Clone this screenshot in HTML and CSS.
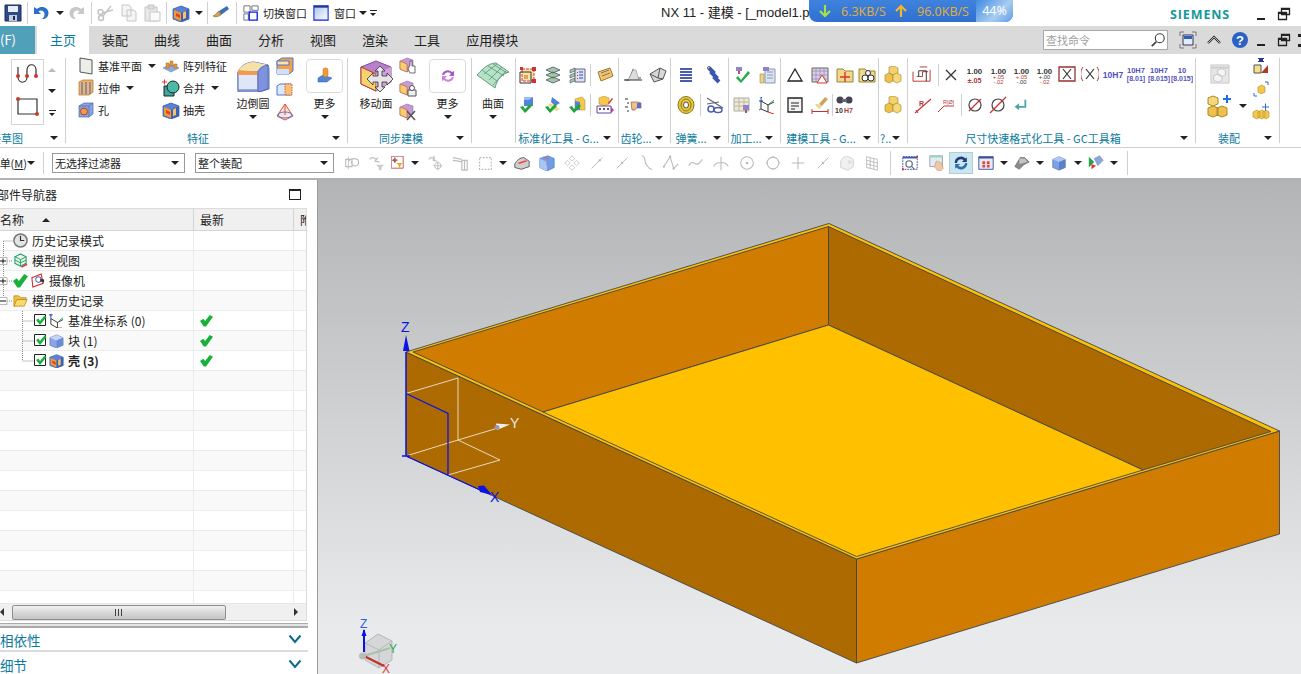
FILE: index.html
```html
<!DOCTYPE html>
<html lang="zh-CN">
<head>
<meta charset="utf-8">
<title>NX 11 - 建模</title>
<link rel="stylesheet" href="styles.css">
</head>
<body>
<svg class="sprite" xmlns="http://www.w3.org/2000/svg">
<symbol id="save" viewBox="0 0 18 18"><path d="M1 1h16v16H1z" fill="#2d4a8a" stroke="#1c2c55"/><path d="M4 2h10v6H4z" fill="#e8eef8"/><path d="M5 11h8v6H5z" fill="#c5ccd8"/><path d="M9 12h2v4H9z" fill="#1c2c55"/></symbol>
<symbol id="undo" viewBox="0 0 18 18"><path d="M2 3v7h7L6.500 7.500C9 5.500 13 7 12.500 11c-.2 2-1.500 3.500-3 4 4 .5 7-2 7-6C16.500 3.500 9.500 1 5 5z" fill="#2a6fc9"/></symbol>
<symbol id="redo" viewBox="0 0 18 18"><path d="M16 3v7H9l2.500-2.500C9 5.500 5 7 5.500 11c.2 2 1.500 3.500 3 4-4 .5-7-2-7-6C1.500 3.500 8.500 1 13 5z" fill="#c8c8c8"/></symbol>
<symbol id="cut" viewBox="0 0 18 18"><path d="M14 2 6 12M16 6 5 9" stroke="#c4c4c4" stroke-width="1.500" fill="none"/><circle cx="4" cy="14" r="2.500" fill="none" stroke="#c4c4c4" stroke-width="1.500"/><circle cx="3.500" cy="8" r="2.500" fill="none" stroke="#c4c4c4" stroke-width="1.500"/></symbol>
<symbol id="copy" viewBox="0 0 18 18"><path d="M2 1h7l2 2v9H2zM7 6h7l2 2v9H7z" fill="#f4f4f4" stroke="#c6c6c6"/></symbol>
<symbol id="paste" viewBox="0 0 18 18"><path d="M2 3h12v14H2z" fill="#e8e8e8" stroke="#c6c6c6"/><path d="M5 1h6v4H5z" fill="#ddd" stroke="#c6c6c6"/><path d="M7 8h10v9H7z" fill="#fafafa" stroke="#c6c6c6"/></symbol>
<symbol id="shell" viewBox="0 0 18 18"><path d="M1 5l8-3 8 3v10l-8 3-8-3z" fill="#5a82d2" stroke="#2b4d96" stroke-width=".7"/><path d="M2 6l7 3v8l-7-3z" fill="#f09a30"/><path d="M4 9l4 2v3l-4-2z" fill="#e2402c"/><path d="M9 9l8-4v10l-8 3z" fill="#3a62b8"/><path d="M11 8.500l3-1.500v7l-3 1.200z" fill="#fbc060"/></symbol>
<symbol id="brush" viewBox="0 0 18 18"><path d="M7 7l8-5 2 3-8 6z" fill="#3f6fb2"/><path d="M1 12c3-1 4-4 6-5l2 4c-2 1-5 3-8 1z" fill="#c9a65a" stroke="#6a5326" stroke-width=".5"/></symbol>
<symbol id="switch" viewBox="0 0 18 18"><path d="M1 1h7v7H1zM10 1h7v5h-7zM1 10h5v7H1z" fill="#fff" stroke="#667"/><path d="M7 8h9v9H7z" fill="#fff" stroke="#0b1fe0" stroke-width="1.500"/></symbol>
<symbol id="win" viewBox="0 0 18 18"><defs><linearGradient id="gw" x1="0" y1="0" x2="1" y2="1"><stop offset="0" stop-color="#a9c2ea"/><stop offset="1" stop-color="#fff"/></linearGradient></defs><path d="M1 1h16v16H1z" fill="url(#gw)" stroke="#0b1fe0" stroke-width="1.200"/><path d="M1 1h16v2H1z" fill="#203a90"/></symbol>
<symbol id="spline" viewBox="0 0 24 24"><path d="M2 5v10c0 7 9 7 9 0V8c0-7 9-7 9 0v7" fill="none" stroke="#333" stroke-width="1.200"/><circle cx="2" cy="14" r="2" fill="#c83a2e"/><circle cx="11" cy="14" r="2" fill="#c83a2e"/><circle cx="20" cy="14" r="2" fill="#c83a2e"/></symbol>
<symbol id="rectk" viewBox="0 0 24 24"><path d="M2 4h19v15H2z" fill="none" stroke="#333" stroke-width="1.200"/><circle cx="2" cy="4" r="2" fill="#c83a2e"/><circle cx="21" cy="19" r="2" fill="#c83a2e"/></symbol>
<symbol id="plane" viewBox="0 0 18 18"><path d="M3 1l12 2v14L3 15z" fill="#ecefe8" stroke="#555"/></symbol>
<symbol id="pattern" viewBox="0 0 18 18"><path d="M1 11l8-4 8 4-8 4z" fill="#8ea9dc" stroke="#5874b2" stroke-width=".5"/><path d="M4 6h3v5H4zM8 4h3v5H8zM12 7h3v4h-3z" fill="#e8973a" stroke="#a9651a" stroke-width=".5"/></symbol>
<symbol id="extrude" viewBox="0 0 18 18"><path d="M2 3l4-2h10v12l-4 3H2z" fill="#f2b36a" stroke="#b06a20" stroke-width=".7"/><path d="M5 3v12M9 3v12M13 3v12" stroke="#4a74c8" stroke-width="1.200"/></symbol>
<symbol id="unite" viewBox="0 0 18 18"><path d="M2 7h10v10H2z" fill="#3fa59c" stroke="#222"/><circle cx="11" cy="8" r="6" fill="#4cb9a9" stroke="#222"/><path d="M0 3h5M2.500.500v5" stroke="#d33" stroke-width="1"/></symbol>
<symbol id="hole" viewBox="0 0 18 18"><path d="M2 5l5-3h9v11l-4 3H2z" fill="#8aa5e0" stroke="#4b68ab" stroke-width=".7"/><path d="M12 16V5l4-3M12 5H2" stroke="#4b68ab" stroke-width=".7" fill="none"/><circle cx="7" cy="10.500" r="3.500" fill="#e8a050" stroke="#c43a2a"/></symbol>
<symbol id="blend" viewBox="0 0 34 32"><path d="M2 12C5 5 12 2 18 2L32 5C33 7 33 10 33 12v17l-10 3H2z" fill="#a7b7ea" stroke="#5a6eb8"/><path d="M2 12C5 5 12 2 18 2l14 3c-7 0-9 3-11 7z" fill="#f6e2a6"/><path d="M2 12h20v18H2z" fill="#dfe6f7" stroke="#5a6eb8"/><path d="M2 10l20 2v3H2z" fill="#f09a54"/><path d="M22 12c2-4 5-6 10-7v24l-10 3z" fill="#7f92de" stroke="#5a6eb8"/></symbol>
<symbol id="chamf" viewBox="0 0 18 18"><path d="M1 4l5-3h11v13l-4 3H1z" fill="#f2a04c" stroke="#4d79c9"/><path d="M1 4h12v4H1z" fill="#fce2ae" stroke="#4d79c9"/><path d="M1 12h12v5H1z" fill="#cfe0fa"/></symbol>
<symbol id="offset" viewBox="0 0 18 18"><path d="M1 6l3-2h11v11H1z" fill="#dfe8fb" stroke="#4d79c9"/><path d="M9 4h7v11H9z" fill="#f5c26d" stroke="#d55" stroke-dasharray="1.500 1"/></symbol>
<symbol id="cone" viewBox="0 0 18 18"><path d="M9 1L1 13l8 4 8-4z" fill="#f9e3da" stroke="#e0503a"/><ellipse cx="9" cy="12" rx="7" ry="3" fill="none" stroke="#4d79c9"/><path d="M9 1v11" stroke="#e0503a"/></symbol>
<symbol id="moreblk" viewBox="0 0 18 18"><path d="M2 11l5-3 9 3-5 4H2z" fill="#4f86d6" stroke="#2f5aa5" stroke-width=".5"/><rect x="7" y="1" width="5" height="9" rx="2" fill="#f09a30" stroke="#c5701a" stroke-width=".5"/></symbol>
<symbol id="moveface" viewBox="0 0 34 32"><path d="M2 7l15-6 15 6v15l-15 9-15-7z" fill="#b880cc" stroke="#7a4c92"/><path d="M2 7l15 7v17L2 24z" fill="#f5d36a" stroke="#c0392b"/><path d="M17 14l15-7v15l-15 9z" fill="#d1a3dd"/><path d="M21 6l5 5h-3v5h5v-3l6 6-6 6v-3h-5v5h3l-5 5-5-5h3v-5h-5v3l-6-6 6-6v3h5v-5h-3z" fill="#e6e6e6" stroke="#333" stroke-width=".8"/></symbol>
<symbol id="facehand" viewBox="0 0 18 18"><path d="M1 4l7-3 6 2v8l-6 4-7-3z" fill="#c79ad2" stroke="#8a5ea0" stroke-width=".5"/><path d="M1 4l7 3v8l-7-3z" fill="#f7d06a" stroke="#c0392b" stroke-width=".5"/><path d="M11 8V4h2v5h3v7h-5l-2-4z" fill="#fff" stroke="#333" stroke-width=".7"/></symbol>
<symbol id="facecopy" viewBox="0 0 18 18"><path d="M1 4l7-3 6 2v8l-6 4-7-3z" fill="#c79ad2" stroke="#8a5ea0" stroke-width=".5"/><path d="M1 4l7 3v8l-7-3z" fill="#f7d06a" stroke="#c0392b" stroke-width=".5"/><path d="M9 10h8v6H9z" fill="#eee" stroke="#555"/><circle cx="13" cy="8" r="2.500" fill="#fff" stroke="#555"/></symbol>
<symbol id="facedel" viewBox="0 0 18 18"><path d="M1 4l7-3 6 2v8l-6 4-7-3z" fill="#c79ad2" stroke="#8a5ea0" stroke-width=".5"/><path d="M1 4l7 3v8l-7-3z" fill="#f7d06a" stroke="#c0392b" stroke-width=".5"/><path d="M8 8l8 9M16 8l-8 9" stroke="#555" stroke-width="1.500"/></symbol>
<symbol id="syncmore" viewBox="0 0 18 18"><path d="M3 8a6 6 0 0 1 10-3l2-1v5h-5l2-2a4 4 0 0 0-7 1z" fill="#a658c4"/><path d="M15 10a6 6 0 0 1-10 3l-2 1V9h5l-2 2a4 4 0 0 0 7-1z" fill="#c987dc"/></symbol>
<symbol id="surface" viewBox="0 0 34 28"><path d="M1 13C8 5 14 1 20 1l13 9c-7 2-12 7-14 16z" fill="#b4e3c6" stroke="#6c9a7e"/><path d="M6 8l15 11M12 4l16 10M17 2l14 9M26 5L13 18M21 2L8 12M30 9L17 23" stroke="#5f927a" stroke-width=".8" fill="none"/></symbol>
<symbol id="std1" viewBox="0 0 18 18"><path d="M3 3h12v12H3z" fill="#f7e5a6" stroke="#d33" stroke-dasharray="3 1"/><path d="M1 6h11v11H1z" fill="none" stroke="#333"/><rect x="5" y="9" width="4" height="4" fill="#e9a05a"/><path d="M13 1h4v4h-4zM1 1h3v3H1zM13 13h4v4h-4z" fill="#c33"/></symbol>
<symbol id="std2" viewBox="0 0 18 18"><path d="M2 4l7-3 7 3-7 3zM2 9l7-3 7 3-7 3zM2 14l7-3 7 3-7 3z" fill="#a6c6a4" stroke="#456" stroke-width=".8"/></symbol>
<symbol id="std3" viewBox="0 0 18 18"><path d="M2 4l5-2v3L2 7zM2 9l5-2v3l-5 2zM2 14l5-2v3l-5 2z" fill="#a6c6a4" stroke="#456" stroke-width=".6"/><path d="M7 3h10v13H7z" fill="#d8e4f5" stroke="#667"/><path d="M9 6h1v1H9zM9 9h1v1H9zM9 12h1v1H9z" fill="#c33"/><path d="M11 6h4M11 9h4M11 12h4" stroke="#44a"/></symbol>
<symbol id="tag" viewBox="0 0 18 18"><path d="M2 6l12-4 3 8-12 5z" fill="#f3c56b" stroke="#a8742c"/><path d="M5 7l8-3M6 10l8-3" stroke="#777"/></symbol>
<symbol id="chk1" viewBox="0 0 18 18"><path d="M5 1h9v9H5z" fill="#4f84d8"/><path d="M5 1l4-0h5l-4 3H5z" fill="#9cbcf0"/><path d="M1 11l3-1 2 3 5-5 2 2-7 7z" fill="#1fa53a"/></symbol>
<symbol id="chk2" viewBox="0 0 18 18"><path d="M8 1l8 6-5 3-4-4z" fill="#4f84d8"/><path d="M6 7l10 6-4 2-8-6z" fill="#e8dc86"/><path d="M1 11l3-1 2 3 5-5 2 2-7 7z" fill="#1fa53a"/></symbol>
<symbol id="chk3" viewBox="0 0 18 18"><path d="M7 3l7-2 3 3v10H7z" fill="#f5c84a" stroke="#a88a2c" stroke-width=".5"/><path d="M7 5l5 1v8H7z" fill="#4f84d8"/><path d="M1 11l3-1 2 3 5-5 2 2-7 7z" fill="#1fa53a"/></symbol>
<symbol id="boxtxt" viewBox="0 0 18 18"><path d="M3 2l5-2 5 2v6l-5 2-5-2z" fill="#f5c84a" stroke="#a88a2c" stroke-width=".5"/><path d="M1 10h14v7H1z" fill="#fff" stroke="#634a9a"/><path d="M3 13h2M7 13h2M11 13h2" stroke="#634a9a" stroke-width="2"/><path d="M15 11l3 3-3 3z" fill="#b33aa8"/><path d="M12 7l4-5 1 1-4 5z" fill="#c33"/></symbol>
<symbol id="gear1" viewBox="0 0 18 18"><path d="M1 14h4l4-10 3 8h5" fill="none" stroke="#555" stroke-width="1.200"/><path d="M4 14L9 4h3l3 10" fill="#ddd" stroke="#888" stroke-width=".6"/><path d="M0 14h18" stroke="#333"/></symbol>
<symbol id="gear2" viewBox="0 0 18 18"><path d="M1 8l10-6 6 3-3 8-9 3z" fill="#d8d8d8" stroke="#555"/><path d="M1 8l8 4 2-10M14 13L9 12" stroke="#555" fill="none"/></symbol>
<symbol id="gear3" viewBox="0 0 18 18"><path d="M1 3h3M3 7h2M1 11h3M3 15h2" stroke="#333"/><path d="M7 6h7l3 1v5h-5l-1 2H8z" fill="#f0c090" stroke="#7a4a20" stroke-width=".6"/><path d="M13 7h4v5h-4z" fill="#5a6ecb"/></symbol>
<symbol id="spring" viewBox="0 0 18 18"><path d="M3 3h12M3 6h12M3 9h12M3 12h12M3 15h12" stroke="#4a5cb0" stroke-width="1.800"/></symbol>
<symbol id="spring2" viewBox="0 0 18 18"><path d="M3 2l4 4-1 1 4 4-1 1 4 4" fill="none" stroke="#3b55b0" stroke-width="4"/><circle cx="3" cy="2" r="1.500" fill="none" stroke="#556"/></symbol>
<symbol id="coil" viewBox="0 0 18 18"><ellipse cx="9" cy="9" rx="8" ry="8.500" fill="#e8c83a" stroke="#8a7420"/><ellipse cx="9" cy="9" rx="5" ry="6" fill="none" stroke="#8a7420"/><ellipse cx="9" cy="9" rx="2.500" ry="3" fill="#fff" stroke="#555"/></symbol>
<symbol id="scis" viewBox="0 0 18 18"><path d="M1 2l16 10M1 8l12-2" stroke="#667" stroke-width="1.200"/><ellipse cx="12" cy="14" rx="4" ry="2.500" fill="none" stroke="#4a5cb0" stroke-width="1.500"/><ellipse cx="5" cy="13" rx="3" ry="3" fill="none" stroke="#4a5cb0" stroke-width="1.500"/></symbol>
<symbol id="mach1" viewBox="0 0 18 18"><path d="M3 1h6v4H3z" fill="#8f84c8"/><path d="M5 5h2v3H5z" fill="#b6536a"/><path d="M5 10l3 4 7-9 2 2-9 10-5-5z" fill="#22ad4a"/></symbol>
<symbol id="mach2" viewBox="0 0 18 18"><path d="M7 3h10v14H7z" fill="#dce6f2" stroke="#8a96b0"/><path d="M9 6h6M9 9h6M9 12h6" stroke="#8a96b0"/><path d="M2 8h4v9H2z" fill="#e8d58a" stroke="#8a7420" stroke-width=".5"/><path d="M5 1h6v4H5z" fill="#8f84c8"/></symbol>
<symbol id="mach3" viewBox="0 0 18 18"><path d="M1 2h15v13H1z" fill="#f1ebcd" stroke="#aaa"/><path d="M1 6h15M1 10h15M6 2v13M11 2v13" stroke="#b6b6b6"/><path d="M10 9h6v5h-6z" fill="#8f84c8"/><path d="M12 14h2v3h-2z" fill="#b6536a"/></symbol>
<symbol id="mach4" viewBox="0 0 18 18"><path d="M3 5l7 4v7l-7-3zM10 9l6-3" fill="none" stroke="#333"/><path d="M3 1v4M3 13l-2 1" stroke="#26a"/><path d="M10 16l6 2" stroke="#c33"/><path d="M11 8l5-4" stroke="#2a5"/><path d="M1 5h4M3 1l1 1" stroke="#1538c8"/></symbol>
<symbol id="tri" viewBox="0 0 18 18"><path d="M9 3L2 15h14z" fill="none" stroke="#222" stroke-width="1.300"/></symbol>
<symbol id="tabl" viewBox="0 0 18 18"><path d="M1 2h16v14H1z" fill="#d9d0e8" stroke="#665"/><path d="M1 5h16M1 9h16M1 13h16M5 2v14M9 2v14M13 2v14" stroke="#8a7aa8" stroke-width=".6"/><path d="M11 9l5 8H6z" fill="#fff" stroke="#d33"/></symbol>
<symbol id="fold1" viewBox="0 0 18 18"><path d="M1 3h6l2 2h8v11H1z" fill="#eed98a" stroke="#9a8436"/><path d="M9 6v10M4 11h10" stroke="#d33" stroke-width="1.400"/></symbol>
<symbol id="fold2" viewBox="0 0 18 18"><path d="M1 3h6l2 2h8v11H1z" fill="#eed98a" stroke="#9a8436"/><circle cx="7" cy="12" r="3" fill="#fff" stroke="#333"/><circle cx="13" cy="12" r="3" fill="#fff" stroke="#333"/><circle cx="10" cy="7" r="2.500" fill="#fff" stroke="#333"/></symbol>
<symbol id="note" viewBox="0 0 18 18"><path d="M2 2h14v14H2z" fill="#f3f3f3" stroke="#222" stroke-width="1.300"/><path d="M5 7h8M5 10h8M5 13h4" stroke="#222"/></symbol>
<symbol id="paint" viewBox="0 0 18 18"><path d="M8 8l6-7 3 2-6 7z" fill="#c9a65a"/><path d="M4 8c2 0 4 0 7 2l-2 3c-2-1-4-3-5-5z" fill="#e7d594"/><path d="M1 13v5M17 13v5M1 15.500h16" stroke="#b33"/></symbol>
<symbol id="cubes" viewBox="0 0 18 18"><path d="M5 1l5-1 4 2v5l-5 2-4-2z" fill="#f5d16a" stroke="#9a8436" stroke-width=".6"/><path d="M1 9l4-2 4 2v6l-4 2-4-2z" fill="#efc04a" stroke="#9a8436" stroke-width=".6"/><path d="M9 9l4-2 4 2v6l-4 2-4-2z" fill="#f7d878" stroke="#9a8436" stroke-width=".6"/></symbol>
<symbol id="dim" viewBox="0 0 22 20"><path d="M1 6v10M19 4v12M1 16h18M5 11h6V6h6" fill="none" stroke="#b33"/><path d="M7 11V5h8v11" fill="none" stroke="#333"/><path d="M8 1h8" stroke="#b33"/></symbol>
<symbol id="x" viewBox="0 0 18 18"><path d="M4 4l10 10M14 4L4 14" stroke="#333" stroke-width="1.300"/></symbol>
<symbol id="xbox" viewBox="0 0 18 18"><path d="M1 1h16v14H1z" fill="#fff" stroke="#9a3030" stroke-width="1.300"/><path d="M5 3l8 10M13 3L5 13" stroke="#333" stroke-width="1.200"/></symbol>
<symbol id="xpar" viewBox="0 0 18 18"><path d="M2 1C-1 5-1 11 2 15" fill="none" stroke="#b33"/><path d="M16 1c3 4 3 10 0 14" fill="none" stroke="#b33"/><path d="M5 3l8 10M13 3L5 13" stroke="#333" stroke-width="1.200"/></symbol>
<symbol id="dia1" viewBox="0 0 18 18"><circle cx="9" cy="9" r="6" fill="#fff" stroke="#444" stroke-width="1.200"/><path d="M3 15L15 3" stroke="#c33" stroke-width="1.200"/></symbol>
<symbol id="dia2" viewBox="0 0 18 18"><circle cx="9" cy="9" r="6" fill="none" stroke="#444" stroke-width="1.200"/><path d="M1 17L17 1" stroke="#c33" stroke-width="1.200"/></symbol>
<symbol id="ret" viewBox="0 0 18 18"><path d="M14 3v7H8V7L3 11l5 4v-3h8V3z" fill="#4aa5a8"/></symbol>
<symbol id="asmgrey" viewBox="0 0 22 22"><path d="M1 1h20v20H1z" fill="#e6e6e6" stroke="#c9c9c9"/><path d="M1 4h20" stroke="#ccc" stroke-width="2"/><path d="M4 13l5-2 4 2v5l-4 2-5-2zM8 7l5-2 4 2v5l-4 2-4-2z" fill="#f4f4f4" stroke="#c4c4c4"/></symbol>
<symbol id="asmadd" viewBox="0 0 26 24"><path d="M2 4l5-2 5 2v6l-5 2-5-2z" fill="#f7d878" stroke="#a88a2c"/><path d="M2 14l5-2 5 2v7l-5 2-5-2zM11 14l5-2 5 2v7l-5 2-5-2z" fill="#efc04a" stroke="#a88a2c"/><path d="M17 5h8M21 1v8" stroke="#1f6fe0" stroke-width="2"/></symbol>
<symbol id="asm1" viewBox="0 0 18 18"><path d="M6 1l3 3 3-3M6 5l3-3 3 3" fill="#223a90" stroke="#223a90"/><path d="M2 8h7v8H2z" fill="#f3e08a" stroke="#555"/><path d="M16 16H9l7-8z" fill="#b03a2a"/></symbol>
<symbol id="asm2" viewBox="0 0 18 18"><path d="M6 7l4-2 3 2v5l-4 2-3-2z" fill="#f5c84a" stroke="#a88a2c" stroke-width=".6"/><path d="M2 16v-3M2 16h3M13 2h3v3" stroke="#2a6fc9" fill="none"/></symbol>
<symbol id="asm3" viewBox="0 0 18 18"><path d="M1 9l4-2 3 2v5l-3 2-4-2zM6 9l4-2 3 2v5l-3 2-4-2zM11 9l3-2 3 2v5l-3 2-3-2z" fill="#f5c84a" stroke="#a88a2c" stroke-width=".6"/><path d="M10 4h7M13.500.500v7" stroke="#2a6fc9"/></symbol>
<symbol id="s1" viewBox="0 0 18 18"><path d="M2 5h7v8H2zM5 7c3-4 8-3 10-2 2 2 2 6-1 7-3 1-6-2-6-5" fill="none" stroke="#bcbcbc" stroke-width="1.200"/><path d="M5 2v14" stroke="#bcbcbc"/></symbol>
<symbol id="s2" viewBox="0 0 18 18"><path d="M1 5c2-3 5-2 7 0M10 3l-3 4 5 1" fill="none" stroke="#bcbcbc" stroke-width="1.300"/><path d="M8 11h9l-3 3v3h-3v-3z" fill="#ccc"/></symbol>
<symbol id="s3" viewBox="0 0 18 18"><path d="M.500.500h15v15H.500z" fill="#fff" stroke="#b53838"/><path d="M5 2v7M1.500 5.500h7" stroke="#444"/><circle cx="5" cy="5.500" r="1.800" fill="none" stroke="#c33"/><path d="M7 9h8l-3 3v3h-2v-3z" fill="#e9a928"/></symbol>
<symbol id="s4" viewBox="0 0 18 18"><path d="M1 5c2-3 5-2 7 0M7 1L6 6l4 1" fill="none" stroke="#bcbcbc" stroke-width="1.300"/><circle cx="11" cy="12" r="3.500" fill="none" stroke="#bcbcbc"/><path d="M11 7v10M6 12h10" stroke="#bcbcbc"/></symbol>
<symbol id="s5" viewBox="0 0 18 18"><path d="M1 3l5 1 5 1M1 6l6 1 5 1M11 6h6v11h-6zM14 6v11" stroke="#bcbcbc" fill="none" stroke-width="1.300"/></symbol>
<symbol id="s6" viewBox="0 0 18 18"><path d="M3 3h13v13H3z" fill="none" stroke="#b8b8b8" stroke-dasharray="2 1.500" stroke-width="1.300"/></symbol>
<symbol id="s7" viewBox="0 0 18 18"><path d="M1 10C3 6 7 3 11 3l6 4v6l-9 3-7-2z" fill="#cfcfcf" stroke="#555"/><path d="M4 9l9-3 2 1-9 3z" fill="#e44"/></symbol>
<symbol id="s8" viewBox="0 0 18 18"><path d="M1 4l9-3 7 3v10l-8 4-8-4z" fill="#6f9de6" stroke="#3a68b5" stroke-width=".6"/><path d="M1 4l8 4v10l-8-4z" fill="#a6c6f3"/><path d="M5 2l6 3M9 8v4" stroke="#e46060"/></symbol>
<symbol id="s9" viewBox="0 0 18 18"><path d="M9 1l3 3-3 3-3-3zM9 11l3 3-3 3-3-3zM1 9l3-3 3 3-3 3zM11 9l3-3 3 3-3 3z" fill="none" stroke="#c4c4c4"/></symbol>
<symbol id="sln" viewBox="0 0 18 18"><path d="M3 15L15 3" stroke="#bbb" stroke-width="1.100"/><circle cx="12" cy="6" r="1.300" fill="#bbb"/></symbol>
<symbol id="sln2" viewBox="0 0 18 18"><path d="M3 15L15 3" stroke="#bbb" stroke-width="1.100"/><circle cx="9" cy="9" r="1.400" fill="#bbb"/></symbol>
<symbol id="scrv" viewBox="0 0 18 18"><path d="M4 1c5 0 3 6 5 9s3 6 7 6" fill="none" stroke="#bbb" stroke-width="1.200"/></symbol>
<symbol id="spoly" viewBox="0 0 18 18"><path d="M1 13L8 2l4 13 5-5" fill="none" stroke="#bbb" stroke-width="1.200"/><circle cx="8" cy="2" r="1.300" fill="#bbb"/><circle cx="12" cy="15" r="1.300" fill="#bbb"/><circle cx="1" cy="13" r="1.300" fill="#bbb"/></symbol>
<symbol id="swave" viewBox="0 0 18 18"><path d="M1 12c3-6 5-3 8-2s4-1 7-5" fill="none" stroke="#bbb" stroke-width="1.200"/></symbol>
<symbol id="sarc" viewBox="0 0 18 18"><path d="M1 13c2-6 14-6 16 0M9 2v15" fill="none" stroke="#bbb" stroke-width="1.200"/></symbol>
<symbol id="scir" viewBox="0 0 18 18"><circle cx="9" cy="9" r="7" fill="none" stroke="#bbb" stroke-width="1.200"/><circle cx="9" cy="9" r="1.500" fill="#bbb"/></symbol>
<symbol id="scir2" viewBox="0 0 18 18"><circle cx="9" cy="9" r="6.500" fill="none" stroke="#bbb" stroke-width="1.200"/><path d="M9 1v2M9 15v2M1 9h2M15 9h2" stroke="#bbb"/></symbol>
<symbol id="splus" viewBox="0 0 18 18"><path d="M9 2v14M2 9h14" stroke="#bbb" stroke-width="1.200"/></symbol>
<symbol id="sface" viewBox="0 0 18 18"><path d="M2 7c1-4 6-6 9-5l5 3v8l-6 4-8-3z" fill="#f0f0f0" stroke="#d0d0d0"/><circle cx="12" cy="8" r="2" fill="#ddd"/></symbol>
<symbol id="sgrid" viewBox="0 0 18 18"><path d="M3 2l12 3v12L3 14z" fill="none" stroke="#bbb"/><path d="M7 3v12M11 4v12M3 6l12 3M3 10l12 3" stroke="#bbb"/></symbol>
<symbol id="v1" viewBox="0 0 18 18"><path d="M1 2h16v14H1z" fill="#fff" stroke="#2c4a9a" stroke-dasharray="2 1"/><path d="M1 2h16v2H1z" fill="#3a5cb0"/><circle cx="8" cy="10" r="3.500" fill="none" stroke="#667" stroke-width="1.300"/><path d="M11 13l3 3" stroke="#667" stroke-width="1.300"/><circle cx="1" cy="16" r="1.300" fill="#c33"/><circle cx="17" cy="2" r="1.300" fill="#c33"/></symbol>
<symbol id="v2" viewBox="0 0 18 18"><path d="M1 1h14v12H1z" fill="#e3ebf5" stroke="#99a"/><path d="M1 1h14v2H1z" fill="#9db"/><path d="M8 7l2 0 4 2 2 6-3 3h-3l-4-5z" fill="#eec7a4" stroke="#b08a6a" stroke-width=".5"/></symbol>
<symbol id="v3" viewBox="0 0 18 18"><path d="M2 9a7 7 0 0 1 12-5l1.500-1.500V8h-5.500L12 6A4.500 4.500 0 0 0 4.500 9z" fill="#1c3f7c"/><path d="M16 9a7 7 0 0 1-12 5l-1.500 1.500V10H8l-2 2A4.500 4.500 0 0 0 13.500 9z" fill="#2a6fb0"/></symbol>
<symbol id="v4" viewBox="0 0 18 18"><path d="M1 2h16v14H1z" fill="#e8e8f5" stroke="#3a4f9a"/><path d="M1 2h16v2H1z" fill="#3a4f9a"/><path d="M5 7h3v3H5zM10 7h3v3h-3zM5 11h3v3H5zM10 11h3v3h-3z" fill="#d84a3a"/></symbol>
<symbol id="v5" viewBox="0 0 18 18"><path d="M1 13l6-10h5l5 5-6 3-5 5z" fill="#8a8a8a" stroke="#555" stroke-width=".6"/><path d="M6 4h6l3 4-9 2z" fill="#c4c4c4"/></symbol>
<symbol id="v6" viewBox="0 0 18 18"><path d="M2 5l7-3 7 3v9l-7 3-7-3z" fill="#7ea0e4" stroke="#4a68a8" stroke-width=".6"/><path d="M2 5l7 3 7-3-7-3z" fill="#b0c8f2"/><path d="M9 8v9l7-3V5z" fill="#5b80cc"/></symbol>
<symbol id="v7" viewBox="0 0 18 18"><path d="M7 4l6-3 4 5-6 6z" fill="#8ea6d8" stroke="#5d78b0" stroke-width=".5"/><path d="M1 2l6 6-6 6z" fill="#26a34a"/><path d="M4 10l5 2-5 4z" fill="#d33"/></symbol>
<symbol id="clock" viewBox="0 0 16 16"><circle cx="8" cy="8" r="7" fill="#e4e4e4" stroke="#777" stroke-width="1.600"/><path d="M8 3v5h4" fill="none" stroke="#333" stroke-width="1.300"/></symbol>
<symbol id="mview" viewBox="0 0 16 16"><path d="M8 1l6 3v7l-6 3-6-3V4z" fill="#e8f6ea" stroke="#1fa066" stroke-width="1.100"/><path d="M2 4l6 3 6-3M8 7v7M2 7.500l6 3 6-3" fill="none" stroke="#1fa066"/><path d="M9 15l6-3" stroke="#d33" stroke-width="1.500"/></symbol>
<symbol id="ok" viewBox="0 0 14 14"><path d="M0 7.500L3.500 5l2 2.500L10.500 1 14 3 6.500 13.500H4z" fill="#19b13c"/></symbol>
<symbol id="cam" viewBox="0 0 16 16"><path d="M2 5l10-4 2 10-11 4z" fill="#fff" stroke="#d9281e" stroke-width="1.100"/><circle cx="9" cy="7" r="3" fill="none" stroke="#2a3fa8"/><path d="M11 6l4 1v3l-4-1z" fill="#333"/></symbol>
<symbol id="fold" viewBox="0 0 16 16"><path d="M1 3h5l2 2h6v2H5l-3 7H1z" fill="#f3c23a" stroke="#a97a14" stroke-width=".7"/><path d="M4 7h11l-3 7H1z" fill="#fbd86a" stroke="#a97a14" stroke-width=".7"/></symbol>
<symbol id="cb" viewBox="0 0 13 13"><path d="M.500.500h11v11H.500z" fill="#fff" stroke="#222"/><path d="M2 6l2.500-1.500L6 7l4.500-5.500L12.500 3 6 11z" fill="#19b13c"/></symbol>
<symbol id="csys" viewBox="0 0 16 16"><path d="M2 6l7 4v6L2 12zM9 10l6-3" fill="none" stroke="#333"/><path d="M2 1v5M0 2h4" stroke="#1538c8"/><path d="M9 16l5 0" stroke="#d33"/><path d="M11 8l4-3" stroke="#2a5"/></symbol>
<symbol id="blk" viewBox="0 0 16 16"><path d="M1 5l7-3 7 3v8l-7 3-7-3z" fill="#8aa6e6" stroke="#4a68a8" stroke-width=".6"/><path d="M1 5l7 3 7-3-7-3z" fill="#c4d4f5"/><path d="M8 8v8l7-3V5z" fill="#6b8ad6"/></symbol>
<symbol id="search" viewBox="0 0 18 18"><circle cx="11" cy="7" r="5" fill="#fff" stroke="#444" stroke-width="1.300"/><path d="M7 11l-5 5" stroke="#444" stroke-width="2"/></symbol>
<symbol id="frame" viewBox="0 0 18 18"><path d="M1 5V1h4M13 1h4v4M17 13v4h-4M5 17H1v-4" fill="none" stroke="#777"/><path d="M4 4h10v10H4z" fill="#e4edf7" stroke="#335"/><path d="M5 5h8v3H5z" fill="#2a62c0"/></symbol>
<symbol id="chev" viewBox="0 0 18 18"><path d="M3 12l6-6 6 6" fill="none" stroke="#222" stroke-width="2.200"/><path d="M3 12l6-6 6 6" fill="none" stroke="#fff" stroke-width=".7"/></symbol>
<symbol id="dn" viewBox="0 0 14 14"><path d="M7 1v11M2 7l5 5 5-5" fill="none" stroke="#a6e04a" stroke-width="2.200"/></symbol>
<symbol id="upa" viewBox="0 0 14 14"><path d="M7 13V2M2 7l5-5 5 5" fill="none" stroke="#f6b32c" stroke-width="2.200"/></symbol>
<symbol id="restore" viewBox="0 0 14 14"><path d="M4.500 1.500h8v6h-8z M1.500 5.500h8v7h-8z" fill="none" stroke="#222" stroke-width="1.300"/><path d="M4.500 1.500h8v1.500h-8zM1.500 5.500h8v1.500h-8z" fill="#222"/></symbol>
</svg>

<div class="app">
<header class="titlebar">
  <div class="qat">
    <span class="c"><svg class="i"><use href="#save"/></svg></span><span class="c"><i class="vs"></i></span>
    <span class="c"><svg class="i"><use href="#undo"/></svg></span><span class="c"><i class="ar"></i></span>
    <span class="c"><svg class="i"><use href="#redo"/></svg></span><span class="c"><i class="vs"></i></span>
    <span class="c"><svg class="i"><use href="#cut"/></svg></span><span class="c"><svg class="i"><use href="#copy"/></svg></span>
    <span class="c"><svg class="i"><use href="#paste"/></svg></span><span class="c"><i class="vs"></i></span>
    <span class="c"><svg class="i"><use href="#shell"/></svg></span><span class="c"><i class="ar"></i></span><span class="c"><i class="vs"></i></span>
    <span class="c"><svg class="i"><use href="#brush"/></svg></span><span class="c"><i class="vs"></i></span>
    <span class="c"><svg class="i i16"><use href="#switch"/></svg></span><span class="qt">切换窗口</span>
    <span class="c"><svg class="i i16"><use href="#win"/></svg></span><span class="qt">窗口</span>
    <span class="c"><i class="ar"></i></span><span class="c"><i class="mr"></i></span>
  </div>
  <div class="doc-title">NX 11 - 建模 - [_model1.p</div>
  <div class="spacer"></div>
  <div class="siemens">SIEMENS</div>
  <div class="winbtn"><i class="minb"></i></div>
  <div class="winbtn"><svg class="i i14"><use href="#restore"/></svg></div>
  <div class="netw">
    <svg class="i i14 nd"><use href="#dn"/></svg><span class="nt n1">6.3KB/S</span>
    <svg class="i i14 nu"><use href="#upa"/></svg><span class="nt n2">96.0KB/S</span>
    <span class="npct">44%</span>
  </div>
</header>

<nav class="tabbar">
  <div class="filetab">(F)</div>
  <div class="tab on">主页</div><div class="tab">装配</div><div class="tab">曲线</div><div class="tab">曲面</div><div class="tab">分析</div><div class="tab">视图</div><div class="tab">渲染</div><div class="tab">工具</div><div class="tab">应用模块</div>
  <div class="spacer"></div>
  <div class="searchbox"><span>查找命令</span><svg class="i i16"><use href="#search"/></svg></div>
  <div class="rb"><svg class="i"><use href="#frame"/></svg></div>
  <div class="rb"><svg class="i"><use href="#chev"/></svg></div>
  <div class="rb rb-h"><svg class="i" viewBox="0 0 18 18"><circle cx="9" cy="9" r="8" fill="#2a62c4"/><text x="9" y="13.500" class="helpq">?</text></svg></div>
  <div class="winbtn w2"><i class="minb"></i></div>
  <div class="winbtn w2"><svg class="i i14"><use href="#restore"/></svg></div>
  <div class="winbtn w3"><i class="closeb"></i></div>
</nav>

<section class="ribbon">
  <div class="grp g-sk">
    <div class="body flex">
      <div class="skbox"><svg class="i i24"><use href="#spline"/></svg><svg class="i i24"><use href="#rectk"/></svg></div>
      <div class="skcol"><i class="up"></i><i class="ar"></i><i class="mr"></i></div>
    </div>
    <div class="lbl"><span>直接草图</span><i class="ar"></i></div>
  </div>
  <div class="grp g-fe">
    <div class="body flex">
      <div class="col c1">
        <div class="it"><svg class="i"><use href="#plane"/></svg><span>基准平面</span><i class="ar"></i></div>
        <div class="it"><svg class="i"><use href="#extrude"/></svg><span>拉伸</span><i class="ar"></i></div>
        <div class="it"><svg class="i"><use href="#hole"/></svg><span>孔</span></div>
      </div>
      <div class="col c2">
        <div class="it"><svg class="i"><use href="#pattern"/></svg><span>阵列特征</span></div>
        <div class="it"><svg class="i"><use href="#unite"/></svg><span>合并</span><i class="ar"></i></div>
        <div class="it"><svg class="i"><use href="#shell"/></svg><span>抽壳</span></div>
      </div>
      <div class="big b42"><div class="bi"><svg class="i i34"><use href="#blend"/></svg></div><span>边倒圆</span><i class="ar"></i></div>
      <div class="col c3"><svg class="i"><use href="#chamf"/></svg><svg class="i"><use href="#offset"/></svg><svg class="i"><use href="#cone"/></svg></div>
      <div class="big morebtn m10"><div class="bx"><svg class="i"><use href="#moreblk"/></svg></div><span>更多</span><i class="ar"></i></div>
    </div>
    <div class="lbl"><span>特征</span><i class="ar"></i></div>
  </div>
  <div class="grp g-sy">
    <div class="body flex">
      <div class="big b44"><div class="bi"><svg class="i i34"><use href="#moveface"/></svg></div><span>移动面</span></div>
      <div class="col c4"><svg class="i"><use href="#facehand"/></svg><svg class="i"><use href="#facecopy"/></svg><svg class="i"><use href="#facedel"/></svg></div>
      <div class="big morebtn m11"><div class="bx"><svg class="i"><use href="#syncmore"/></svg></div><span>更多</span><i class="ar"></i></div>
    </div>
    <div class="lbl"><span>同步建模</span><i class="ar"></i></div>
  </div>
  <div class="grp g-su">
    <div class="body flex">
      <div class="big b42"><div class="bi"><svg class="i i34"><use href="#surface"/></svg></div><span>曲面</span><i class="ar"></i></div>
    </div>
  </div>
  <div class="grp g-st">
    <div class="body two">
      <div class="rw g5"><span class="c"><svg class="i"><use href="#std1"/></svg></span><span class="c"><svg class="i"><use href="#std2"/></svg></span><span class="c"><svg class="i"><use href="#std3"/></svg></span><span class="c"><i class="vs"></i></span><span class="c"><svg class="i"><use href="#tag"/></svg></span></div>
      <div class="rw g5"><span class="c"><svg class="i"><use href="#chk1"/></svg></span><span class="c"><svg class="i"><use href="#chk2"/></svg></span><span class="c"><svg class="i"><use href="#chk3"/></svg></span><span class="c"><i class="vs"></i></span><span class="c"><svg class="i"><use href="#boxtxt"/></svg></span></div>
    </div>
    <div class="lbl"><span>标准化工具 - G...</span><i class="ar"></i></div>
  </div>
  <div class="grp g-ge">
    <div class="body two">
      <div class="rw g2a"><span class="c"><svg class="i"><use href="#gear1"/></svg></span><span class="c"><svg class="i"><use href="#gear2"/></svg></span></div>
      <div class="rw g2a"><span class="c"><svg class="i"><use href="#gear3"/></svg></span></div>
    </div>
    <div class="lbl"><span>齿轮...</span><i class="ar"></i></div>
  </div>
  <div class="grp g-sp">
    <div class="body two">
      <div class="rw g3b"><span class="c"><svg class="i"><use href="#spring"/></svg></span><span></span><span class="c"><svg class="i"><use href="#spring2"/></svg></span></div>
      <div class="rw g3b"><span class="c"><svg class="i"><use href="#coil"/></svg></span><span class="c"><i class="vs"></i></span><span class="c"><svg class="i"><use href="#scis"/></svg></span></div>
    </div>
    <div class="lbl"><span>弹簧...</span><i class="ar"></i></div>
  </div>
  <div class="grp g-ma">
    <div class="body two">
      <div class="rw g2c"><span class="c"><svg class="i"><use href="#mach1"/></svg></span><span class="c"><svg class="i"><use href="#mach2"/></svg></span></div>
      <div class="rw g2c"><span class="c"><svg class="i"><use href="#mach3"/></svg></span><span class="c"><svg class="i"><use href="#mach4"/></svg></span></div>
    </div>
    <div class="lbl"><span>加工...</span><i class="ar"></i></div>
  </div>
  <div class="grp g-bu">
    <div class="body two">
      <div class="rw g4d"><span class="c"><svg class="i"><use href="#tri"/></svg></span><span class="c"><svg class="i"><use href="#tabl"/></svg></span><span class="c"></span><span class="c"><svg class="i"><use href="#fold1"/></svg></span><span class="c"><svg class="i"><use href="#fold2"/></svg></span></div>
      <div class="rw g4d"><span class="c"><svg class="i"><use href="#note"/></svg></span><span class="c"><svg class="i"><use href="#paint"/></svg></span><span class="c"><i class="vs"></i></span><span class="c"><svg class="i i20" viewBox="0 0 21 19"><circle cx="6" cy="4" r="3.500" fill="#445"/><circle cx="15" cy="4" r="3.500" fill="#445"/><path d="M8 3h5v3H8z" fill="#667"/><text x="1" y="17" class="t7 b">10</text><text x="10" y="17" class="t7 red">H7</text></svg></span></div>
    </div>
    <div class="lbl"><span>建模工具 - G...</span><i class="ar"></i></div>
  </div>
  <div class="grp g-qq">
    <div class="body two">
      <div class="rw g1"><span class="c"><svg class="i"><use href="#cubes"/></svg></span></div>
      <div class="rw g1"><span class="c"><svg class="i"><use href="#cubes"/></svg></span></div>
    </div>
    <div class="lbl lq"><span>?..</span><i class="ar"></i></div>
  </div>
  <div class="grp g-di">
    <div class="body two">
      <div class="rw d1"><span class="c"><svg class="i i20"><use href="#dim"/></svg></span><span class="c"><i class="vs"></i></span><span class="c"><svg class="i"><use href="#x"/></svg></span>
        <span class="c"><svg class="i i20" viewBox="0 0 20 18"><text x="10" y="8" class="t8 m">1.00</text><text x="10" y="16" class="t7 m red">±.05</text></svg></span>
        <span class="c"><svg class="i i20" viewBox="0 0 20 18"><text x="10" y="7.500" class="t8 m">1.00</text><text x="10" y="12.500" class="t5 m red">+.05</text><text x="10" y="17.500" class="t5 m red">-.02</text></svg></span>
        <span class="c"><svg class="i i20" viewBox="0 0 20 18"><text x="10" y="7.500" class="t8 m">1.00</text><text x="10" y="12.500" class="t5 m red">+.05</text><text x="10" y="17.500" class="t5 m">-.00</text></svg></span>
        <span class="c"><svg class="i i20" viewBox="0 0 20 18"><text x="10" y="7.500" class="t8 m">1.00</text><text x="10" y="12.500" class="t5 m">+.00</text><text x="10" y="17.500" class="t5 m red">-.02</text></svg></span>
        <span class="c"><svg class="i"><use href="#xbox"/></svg></span><span class="c"><svg class="i"><use href="#xpar"/></svg></span>
        <span class="c"><svg class="i i22" viewBox="0 0 22 20"><text x="11" y="13" class="t9 m blu">10H7</text></svg></span>
        <span class="c"><svg class="i i22" viewBox="0 0 22 20"><text x="11" y="8" class="t8 m blu">10H7</text><text x="11" y="16" class="t7 m blu">[8.01]</text></svg></span>
        <span class="c"><svg class="i i22" viewBox="0 0 22 20"><text x="11" y="8" class="t8 m blu">10H7</text><text x="11" y="16" class="t7 m blu">[8.015]</text></svg></span>
        <span class="c"><svg class="i i22" viewBox="0 0 22 20"><text x="11" y="8" class="t8 m blu">10</text><text x="11" y="16" class="t7 m blu">[8.015]</text></svg></span>
      </div>
      <div class="rw d2"><span class="c"><svg class="i" viewBox="0 0 18 18"><path d="M1 17L17 3" stroke="#c33" stroke-width="1.200"/><path d="M2 14l2 3" stroke="#c33"/><text x="5" y="10" class="t7 red">R</text></svg></span><span class="c"><svg class="i" viewBox="0 0 18 18"><path d="M1 16l6-6h10" fill="none" stroke="#c33"/><text x="6" y="8" class="t5 red">R|Ø|</text></svg></span><span class="c"><i class="vs"></i></span><span class="c"><svg class="i"><use href="#dia1"/></svg></span><span class="c"><svg class="i"><use href="#dia2"/></svg></span><span class="c"><svg class="i i16"><use href="#ret"/></svg></span></div>
    </div>
    <div class="lbl"><span>尺寸快速格式化工具 - GC工具箱</span><i class="ar"></i></div>
  </div>
  <div class="grp g-as">
    <div class="body flex">
      <div class="ascol"><svg class="i i22"><use href="#asmgrey"/></svg><div class="asrow"><svg class="i i26"><use href="#asmadd"/></svg><i class="ar"></i></div></div>
      <div class="col c5"><svg class="i"><use href="#asm1"/></svg><svg class="i"><use href="#asm2"/></svg><svg class="i"><use href="#asm3"/></svg></div>
    </div>
    <div class="lbl"><span>装配</span><i class="ar"></i></div>
  </div>
</section>

<section class="selbar">
  <div class="menu-t"><span>单(<u>M</u>)</span></div><i class="ar ma"></i><i class="vs vm"></i>
  <div class="dd d-a"><span>无选择过滤器</span><i class="ar ard"></i></div>
  <div class="dd d-b"><span>整个装配</span><i class="ar ard"></i></div>
  <div class="sbi">
    <span class="c"><svg class="i"><use href="#s1"/></svg></span><span class="c"><svg class="i"><use href="#s2"/></svg></span><span class="c"><svg class="i i16"><use href="#s3"/></svg></span><span class="c"><i class="ar"></i></span>
    <span class="c"><svg class="i"><use href="#s4"/></svg></span><span class="c"><svg class="i"><use href="#s5"/></svg></span><span class="c"><svg class="i"><use href="#s6"/></svg></span><span class="c"><i class="ar"></i></span>
    <span class="c"><svg class="i"><use href="#s7"/></svg></span><span class="c"><svg class="i"><use href="#s8"/></svg></span><span class="c"><svg class="i"><use href="#s9"/></svg></span><span class="c"><svg class="i"><use href="#sln"/></svg></span>
    <span class="c"><svg class="i"><use href="#sln2"/></svg></span><span class="c"><svg class="i"><use href="#scrv"/></svg></span><span class="c"><svg class="i"><use href="#spoly"/></svg></span><span class="c"><svg class="i"><use href="#swave"/></svg></span>
    <span class="c"><svg class="i"><use href="#sarc"/></svg></span><span class="c"><svg class="i"><use href="#scir"/></svg></span><span class="c"><svg class="i"><use href="#scir2"/></svg></span><span class="c"><svg class="i"><use href="#splus"/></svg></span>
    <span class="c"><svg class="i"><use href="#sln2"/></svg></span><span class="c"><svg class="i"><use href="#sface"/></svg></span><span class="c"><svg class="i"><use href="#sgrid"/></svg></span><span class="c"><i class="vs vt"></i></span>
    <span class="c"><svg class="i"><use href="#v1"/></svg></span><span class="c"><svg class="i"><use href="#v2"/></svg></span><span class="c act"><svg class="i"><use href="#v3"/></svg></span><span class="c"><svg class="i"><use href="#v4"/></svg></span><span class="c"><i class="ar"></i></span>
    <span class="c"><svg class="i"><use href="#v5"/></svg></span><span class="c"><i class="ar"></i></span><span class="c"><svg class="i"><use href="#v6"/></svg></span><span class="c"><i class="ar"></i></span><span class="c"><svg class="i"><use href="#v7"/></svg></span><span class="c"><i class="ar"></i></span><span class="c"><i class="vs vt"></i></span>
  </div>
</section>

<main class="main">
  <aside class="panel">
    <div class="phead"><span>部件导航器</span><i class="maxb"></i></div>
    <div class="tree">
      <div class="thead"><div class="th th1"><span>名称</span><i class="sort"></i></div><div class="th th2">最新</div><div class="th th3">附</div></div>
      <div class="rows">
        <div class="row"><div class="nm"><svg class="lead"><path class="dot" d="M3.500 10V20M3.500 10H13"/></svg><svg class="ic"><use href="#clock"/></svg><span>历史记录模式</span></div><div class="la"></div><div class="ex"></div></div>
        <div class="row alt"><div class="nm"><svg class="lead"><path class="dot" d="M3.500 0V20M7 10H13"/><path class="bx7" d="M-1 6.500h8v7h-8z"/><path class="blk" d="M0 10h6M3 7.500v5"/></svg><svg class="ic"><use href="#mview"/></svg><span>模型视图</span></div><div class="la"></div><div class="ex"></div></div>
        <div class="row"><div class="nm"><svg class="lead"><path class="dot" d="M3.500 0V20M7 10H13"/><path class="bx7" d="M-1 6.500h8v7h-8z"/><path class="blk" d="M0 10h6M3 7.500v5"/></svg><svg class="ic"><use href="#ok"/></svg><svg class="ic ic2"><use href="#cam"/></svg><span class="t48">摄像机</span></div><div class="la"></div><div class="ex"></div></div>
        <div class="row alt"><div class="nm"><svg class="lead"><path class="dot" d="M3.500 0V7M7 10H13"/><path class="bx7" d="M-1 6.500h8v7h-8z"/><path class="blk" d="M0 10h6"/></svg><svg class="ic"><use href="#fold"/></svg><span>模型历史记录</span></div><div class="la"></div><div class="ex"></div></div>
        <div class="row"><div class="nm"><svg class="lead l2"><path class="dot" d="M22.500 0V20M22.500 10H34"/></svg><svg class="ic cb"><use href="#cb"/></svg><svg class="ic"><use href="#csys"/></svg><span class="t67">基准坐标系 (0)</span></div><div class="la"><svg class="ok"><use href="#ok"/></svg></div><div class="ex"></div></div>
        <div class="row alt"><div class="nm"><svg class="lead l2"><path class="dot" d="M22.500 0V20M22.500 10H34"/></svg><svg class="ic cb"><use href="#cb"/></svg><svg class="ic"><use href="#blk"/></svg><span class="t67">块 (1)</span></div><div class="la"><svg class="ok"><use href="#ok"/></svg></div><div class="ex"></div></div>
        <div class="row"><div class="nm"><svg class="lead l2"><path class="dot" d="M22.500 0V10M22.500 10H34"/></svg><svg class="ic cb"><use href="#cb"/></svg><svg class="ic"><use href="#shell"/></svg><span class="t67 bold">壳 (3)</span></div><div class="la"><svg class="ok"><use href="#ok"/></svg></div><div class="ex"></div></div>
        <div class="row alt"><div class="nm"></div><div class="la"></div><div class="ex"></div></div>
        <div class="row"><div class="nm"></div><div class="la"></div><div class="ex"></div></div>
        <div class="row alt"><div class="nm"></div><div class="la"></div><div class="ex"></div></div>
        <div class="row"><div class="nm"></div><div class="la"></div><div class="ex"></div></div>
        <div class="row alt"><div class="nm"></div><div class="la"></div><div class="ex"></div></div>
        <div class="row"><div class="nm"></div><div class="la"></div><div class="ex"></div></div>
        <div class="row alt"><div class="nm"></div><div class="la"></div><div class="ex"></div></div>
        <div class="row"><div class="nm"></div><div class="la"></div><div class="ex"></div></div>
        <div class="row alt"><div class="nm"></div><div class="la"></div><div class="ex"></div></div>
        <div class="row"><div class="nm"></div><div class="la"></div><div class="ex"></div></div>
        <div class="row alt"><div class="nm"></div><div class="la"></div><div class="ex"></div></div>
        <div class="row"><div class="nm"></div><div class="la"></div><div class="ex"></div></div>
      </div>
      <div class="hscroll"><i class="sl"></i><div class="thumb"><i></i></div><div class="spacer"></div><i class="sr"></i></div>
    </div>
    <div class="split"></div>
    <div class="sect"><span>相依性</span><svg class="cv" viewBox="0 0 14 10"><path d="M1.500 1.500L7 8l5.500-6.500" fill="none" stroke="#0b6a8c" stroke-width="2"/></svg></div>
    <div class="sect last"><span>细节</span><svg class="cv" viewBox="0 0 14 10"><path d="M1.500 1.500L7 8l5.500-6.500" fill="none" stroke="#0b6a8c" stroke-width="2"/></svg></div>
  </aside>
  <div class="view">
    <svg class="scene" viewBox="318 180 983 494" xmlns="http://www.w3.org/2000/svg">
      <g stroke="#3d4550" stroke-width=".9" stroke-linejoin="round">
        <path d="M406 352L856.500 559V663L406 456z" fill="#ad6a00"/>
        <path d="M856.500 559L1279.500 431V534L856.500 663z" fill="#cf7c00"/>
        <path d="M829 223.500L1279.500 431L856.500 559L406 352z" fill="#ffc000"/>
        <path d="M413 352L828.500 226.500V325L543 412z" fill="#cf7c00"/>
        <path d="M828.500 226.500L1271 431.500L1143 470L828.500 325z" fill="#ad6a00"/>
        <path d="M828.500 325L1143 470L856.500 556.500L543 412z" fill="#ffc000"/>
      </g>
      <g fill="none" stroke="#e6d9c0" stroke-width="1">
        <path d="M406 393.500L458 378V440L406 456M458 440L500 460L448 475"/>
        <path d="M458 440L498 428"/>
      </g>
      <path d="M496 423.500L510 424.500L497 430z" fill="#eee"/><circle cx="497" cy="427.500" r="2.500" fill="#99a"/>
      <text x="510" y="428" class="axl axw">Y</text>
      <g fill="none" stroke="#0a12e6" stroke-width="1.300">
        <path d="M406 352V456M406 393.500L448 413.500V475M406 456L480 490M402 456H410"/>
      </g>
      <path d="M403 351L406 335L409.500 351z" fill="#0a12e6"/>
      <path d="M478 486L484 485.500L492 495L480 492z" fill="#0a12e6"/>
      <text x="401" y="332" class="axl axb">Z</text>
      <text x="490" y="502" class="axl axb">X</text>
      <g>
        <path d="M365 643L378 634L392 641V660L379 668L365 660z" fill="#d5d6d8" stroke="#b6b7b9"/>
        <path d="M365 643L379 650L392 641M379 650V668" fill="none" stroke="#b6b7b9"/>
        <path d="M364 656L390 648" stroke="#a9c0a9" stroke-width="2"/>
        <path d="M364 630V652" stroke="#0a12e6" stroke-width="2"/>
        <path d="M361.500 636L364 629L366.500 636z" fill="#0a12e6"/>
        <path d="M364 656L384 666" stroke="#c0302a" stroke-width="2"/>
        <circle cx="362.500" cy="656" r="3.500" fill="#bbb"/>
        <text x="360" y="628" class="axs axzc">Z</text>
        <text x="389" y="653" class="axs axyc">Y</text>
        <text x="382" y="673" class="axs axxc">X</text>
      </g>
    </svg>
  </div>
</main>
</div>
</body>
</html>
```
FILE: styles.css
```css
*{box-sizing:border-box}
html,body{margin:0;padding:0;height:100%;overflow:hidden}
body{font-family:"Noto Sans CJK SC","Noto Sans",sans-serif;font-size:11px;color:#222;background:#fff}
.sprite{width:0;height:0;position:absolute}
.app{width:1301px;height:674px;display:flex;flex-direction:column;overflow:hidden}
.spacer{flex:1}
i{font-style:normal;display:block}
.i{width:18px;height:18px;display:block;flex:none}
.i14{width:14px;height:14px}.i16{width:16px;height:16px}.i20{width:21px;height:19px}.i22{width:22px;height:20px}
.i24{width:24px;height:24px}.i26{width:26px;height:24px}.i34{width:34px;height:32px}
.c{display:flex;align-items:center;justify-content:center;min-width:0}
.vs{width:1px;height:22px;background:#cfcfcf;flex:none}
.ar{width:0;height:0;border:4px solid transparent;border-top-color:#222;border-bottom:0;flex:none}
.mr{width:7px;height:6px;border-top:1px solid #222;flex:none}
.mr:after{content:"";display:block;margin-top:2px;width:0;border:3.500px solid transparent;border-top-color:#222;border-bottom:0}
.up{width:0;height:0;border:4px solid transparent;border-bottom-color:#bbb;border-top:0}
.t5{font:5.500px "Liberation Sans",sans-serif}
.t7{font:bold 7px "Liberation Sans",sans-serif}
.t8{font:bold 7.500px "Liberation Sans",sans-serif}
.t9{font:bold 8.500px "Liberation Sans",sans-serif}
.m{text-anchor:middle;fill:#333}
.red{fill:#b03a3a}.blu{fill:#5252bc}.b{fill:#333}
.helpq{font:bold 13px "Liberation Sans",sans-serif;fill:#fff;text-anchor:middle}

.titlebar{height:26px;display:flex;align-items:center;position:relative;flex:none;padding-right:6px}
.qat{display:grid;height:26px;grid-template-columns:26px 2px 26px 12px 22px 6px 24px 22px 24px 4px 26px 10px 6px 22px 8px 21px 49px 22px 26px 10px 10px;flex:none;width:378px}
.qt{line-height:26px;font-size:11px;padding-left:2px;white-space:nowrap}
.doc-title{margin-left:283px;font-family:"Liberation Sans","Noto Sans CJK SC",sans-serif;font-size:13px;white-space:nowrap;line-height:26px;color:#222}
.siemens{font:bold 12.500px "Open Sans",sans-serif;color:#129a9a;letter-spacing:.9px;margin-top:3px;width:79px;flex:none}
.winbtn{width:23px;height:26px;display:flex;align-items:center;justify-content:center;margin-top:1px;flex:none}
.minb{width:8px;height:2px;background:#222;margin-top:10px}
.netw{position:absolute;left:809px;top:0;width:204px;height:22px;background:linear-gradient(#3f83de,#2f6fd0);border-radius:0 0 8px 8px;display:flex;align-items:center;font-family:"Open Sans",sans-serif;font-size:12.500px;overflow:hidden}
.nd{margin-left:9px}.nt{color:#e5ae33;white-space:nowrap}.n1{margin-left:9px;width:53px}.n2{margin-left:9px;width:59px}
.npct{background:linear-gradient(135deg,#3f8be0,#a8cdf1 60%,#5d9de6);height:22px;width:37px;color:#fff;text-align:center;line-height:22px;flex:none}

.tabbar{height:28px;background:#dadada;display:flex;align-items:stretch;flex:none;font-size:13px}
.filetab{background:#51a0ba;width:35px;color:#fff;line-height:28px;margin-right:2px;white-space:nowrap}
.tab{padding:0 13px;line-height:28px;color:#222}
.tab.on{background:#fff;color:#0a7a9e}
.searchbox{width:125px;height:20px;margin:4px 7px 0 0;background:#fff;border:1px solid #a8a8a8;display:flex;align-items:center;justify-content:space-between;padding:0 0 0 2px;font-size:11px;color:#a0a0a0;flex:none}
.searchbox .i{margin-right:1px}
.rb{width:26px;display:flex;align-items:center;justify-content:center;flex:none}
.rb-h{width:22px;padding-left:4px}
.w2{width:23px}
.w3{width:6px;justify-content:flex-end}
.closeb{width:3px;height:13px;background:linear-gradient(#222 0 3px,transparent 3px 10px,#222 10px)}

.ribbon{height:94px;display:flex;border-bottom:1px solid #d0d0d0;flex:none}
.grp{flex:none;display:flex;flex-direction:column;background:linear-gradient(#cfcfcf,#cfcfcf) right 4px/1px 85px no-repeat}
.body{height:76px}
.flex{display:flex;padding-top:1px}
.two{display:flex;flex-direction:column;padding-top:6px}
.rw{height:30px;display:grid}
.lbl{height:16px;display:flex;align-items:center;padding-right:6px;color:#0a7a9e;font-size:11px;line-height:16px}
.lbl span{flex:1;text-align:center;white-space:nowrap;min-width:0}
.lbl .ar{margin:0 2px}
.g-sk{width:112px;margin-left:-46px}.g-fe{width:282px}.g-sy{width:124px}.g-su{width:44px}.g-st{width:103px}.g-ge{width:52px}.g-sp{width:58px}.g-ma{width:52px}.g-bu{width:98px}.g-qq{width:29px}.g-di{width:288px}.g-as{width:84px}
.lq{padding-left:1px}
.lq span{text-align:left}
.g-sk .flex{padding-left:57px}
.skbox{width:33px;height:66px;margin-top:4px;border:1px solid #d4d4d4;display:flex;flex-direction:column;align-items:center;justify-content:space-between;padding:2px 0 5px}
.skcol{width:16px;display:flex;flex-direction:column;align-items:center;justify-content:space-around;height:66px;margin-top:4px}
.col{display:flex;flex-direction:column}
.it{height:22px;display:flex;align-items:center;font-size:11px;white-space:nowrap}
.it span{margin-left:3px}
.it .ar{margin-left:6px}
.c1{width:85px;margin-left:11px}
.c2{width:70px}
.c3,.c4,.c5{height:66px;justify-content:space-between;align-items:center;padding-top:2px}
.c3{width:22px}.c4{width:20px}
.big{display:flex;flex-direction:column;align-items:center;padding-top:4px;font-size:11px}
.big span{height:20px;line-height:20px;white-space:nowrap}
.big .ar{margin-top:2px}
.bi{height:34px;display:flex;align-items:center;justify-content:center}
.b42{width:42px}.b44{width:44px;margin-left:6px}
.morebtn{width:37px}
.m10{margin-left:10px}.m11{margin-left:11px}
.bx{width:37px;height:34px;border:1px solid #dcdcdc;border-radius:4px;display:flex;align-items:center;justify-content:center}
.g5{grid-template-columns:24px 25px 24px 2px 27px}
.g2a{grid-template-columns:27px 23px}
.g3b{grid-template-columns:29px 1px 28px}
.g2c{grid-template-columns:26px 23px}
.g4d{grid-template-columns:27px 23px 3px 21px 24px}
.g1{grid-template-columns:28px}
.d1{grid-template-columns:29px 2px 24px 23px 24px 23px 23px 22px 23px 23px 23px 23px 24px}
.d2{grid-template-columns:30px 16px 14px 14px 32px 12px}
.ascol{width:46px;display:flex;flex-direction:column;align-items:flex-start;padding:9px 0 0 13px;gap:10px}
.asrow{display:flex;align-items:center;gap:7px;margin-left:-3px}
.c5{width:22px;margin-left:8px}

.selbar{height:32px;display:flex;align-items:center;border-bottom:2px solid #b2b2b2;flex:none;background:#fff;font-size:11px}
.menu-t{width:27px;display:flex;justify-content:flex-end;white-space:nowrap}
.vm{margin:0 0 0 8px}
.dd{height:20px;border:1px solid #999;display:flex;align-items:center;justify-content:space-between;padding:0 5px 0 2px;flex:none;font-size:11px;white-space:nowrap}
.d-a{width:133px;margin-left:8px}
.d-b{width:139px;margin-left:10px}
.ard{border-width:4.500px 4.500px 0}
.sbi{display:grid;height:30px;margin-left:6px;grid-template-columns:24px 26px 16px 18px 23px 26px 24px 12px 25px 25px 25px 26px 23px 25px 25px 25px 26px 26px 25px 25px 25px 24px 25px 12px 28px 25px 24px 25px 12px 24px 12px 26px 12px 24px 12px 14px}
.sbi .i{transform:scale(.9)}
.act{background:#cde5ec;border:1px solid #a9cfd9;height:22px;margin-top:4px}
.vt{height:24px}

.main{flex:1;display:flex;min-height:0}
.panel{width:318px;border-right:1px solid #9a9a9a;display:flex;flex-direction:column;flex:none;background:#fff}
.phead{height:28px;display:flex;align-items:center;justify-content:space-between;padding:0 16px 0 0;font-size:12px;margin-left:-3px;color:#222;flex:none}
.maxb{width:12px;height:11px;border:1px solid #222;border-top-width:2px}
.tree{margin-right:10px;border:1px solid #dcdcdc;border-left:0;height:413px;display:flex;flex-direction:column;flex:none;font-size:12px}
.thead{height:22px;display:grid;grid-template-columns:194px 100px 1fr;background:#f0f0f0;border-bottom:1px solid #d4d4d4;flex:none;overflow:hidden}
.th{border-right:1px solid #d4d4d4;line-height:22px;padding-left:6px;white-space:nowrap;overflow:hidden}
.th3{border:0}
.th1{padding-left:0;display:flex;align-items:center}
.sort{width:0;height:0;border:4.500px solid transparent;border-bottom-color:#222;border-top:0;margin-left:18px}
.rows{flex:1;overflow:hidden;min-height:0}
.row{height:20px;display:grid;grid-template-columns:194px 100px 1fr;border-bottom:1px solid #ececec}
.alt{background:#f9f9f9}
.nm,.la{border-right:1px solid #ececec}
.nm{display:flex;align-items:center;white-space:nowrap;overflow:hidden}
.lead{width:13px;height:20px;flex:none;display:block}
.l2{width:34px}
.dot{fill:none;stroke:#8a8a8a;stroke-dasharray:1 1}
.bx7{fill:#fff;stroke:#b8b8b8}
.blk{fill:none;stroke:#111}
.ic{width:15px;height:15px;flex:none;display:block;margin-right:4px}
.ic2{margin-right:0;margin-left:-2px}
.cb{width:13px;height:13px;margin-right:2px}
.t48{margin-left:4px}
.bold{font-weight:700}
.la{display:flex;align-items:center;padding-left:6px}
.ok{width:13px;height:13px;display:block}
.hscroll{height:17px;background:#f0f0f0;display:flex;align-items:center;flex:none;border-top:1px solid #e6e6e6}
.sl,.sr{width:0;height:0;border:4px solid transparent;border-left:0;border-right-color:#333}
.sl{margin-right:8px}
.sr{border:4px solid transparent;border-right:0;border-left-color:#333;margin-right:8px}
.thumb{width:214px;height:15px;border:1px solid #8e8e8e;border-radius:2px;background:linear-gradient(#f2f2f2,#d8d8d8 50%,#c4c4c4);display:flex;align-items:center;justify-content:center}
.thumb i{width:8px;height:7px;background:repeating-linear-gradient(90deg,#444 0 1px,transparent 1px 3px)}
.split{height:5px;margin:2px 9px 0 0;background:#e4e4e4;border-top:1px solid #aaa;border-bottom:2px solid #aaa;flex:none}
.sect{height:24px;display:flex;align-items:center;justify-content:space-between;padding:1px 6px 0 0;margin-right:9px;font-size:13.500px;color:#0a7a9e;border-bottom:2px solid #dcdcdc;flex:none}
.sect.last{border:0}
.cv{width:14px;height:10px;display:block;margin-top:-1px}

.view{flex:1;min-width:0;background:linear-gradient(#b3b4b6,#e9eaec 90%)}
.scene{width:983px;height:494px;display:block}
.axl{font:14px "Liberation Sans",sans-serif}
.axb{fill:#0a12e6}.axw{fill:#e8e8e8}
.axs{font:12px "Liberation Sans",sans-serif}
.axzc{fill:#2a5fe0}.axyc{fill:#2aa84a}.axxc{fill:#d83a3a}
```
